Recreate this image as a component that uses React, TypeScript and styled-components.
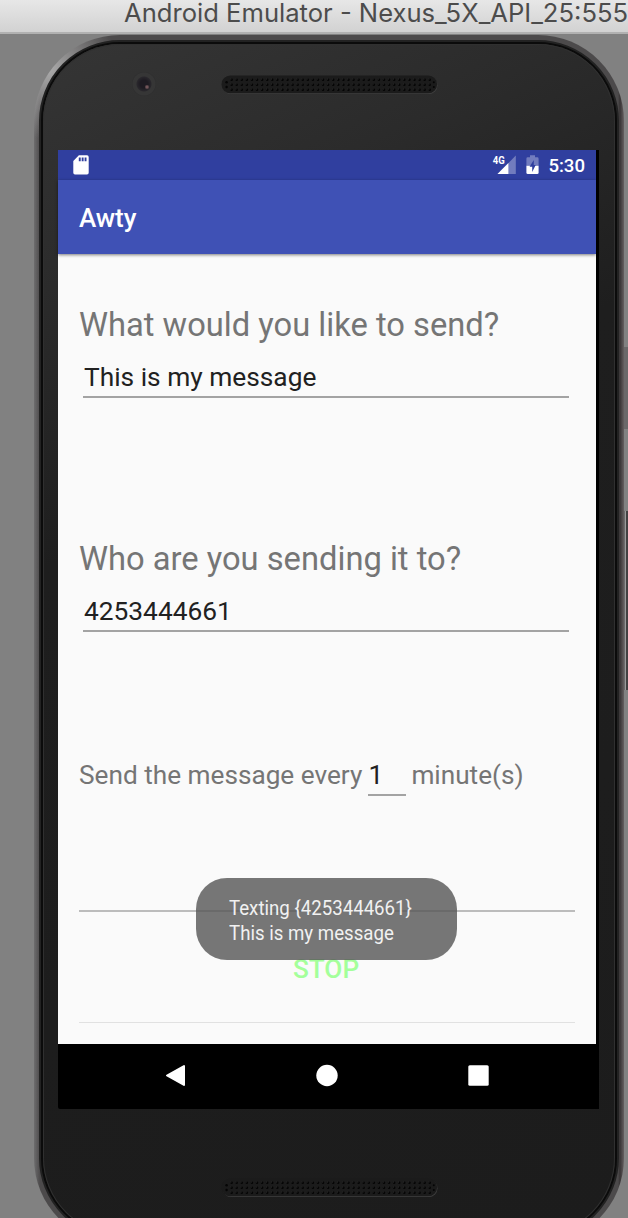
import React from "react";
import styled, { createGlobalStyle } from "styled-components";

const GlobalStyle = createGlobalStyle`
  * { box-sizing: border-box; }
  body { margin: 0; background: #818181; font-family: Roboto, sans-serif; overflow: hidden; }
`;

const Window = styled.div`
  width: 628px;
  height: 1218px;
  overflow: hidden;
  display: flex;
  flex-direction: column;
  background: #818181;
`;

const TitleBar = styled.header`
  flex: none;
  height: 34px;
  padding-left: 124px;
  background: linear-gradient(#e7e7e7, #d2d2d2 32px, #b1b1b1 32px);
  color: #4c4c4c;
  font-family: Inter, sans-serif;
  font-size: 25.6px;
  line-height: 26px;
  white-space: nowrap;
`;

const TitleText = styled.span`
  display: inline-block;
`;

const Stage = styled.main`
  position: relative;
  flex: 1;
  overflow: hidden;
`;

const SideButton = styled.div<{ $top: number; $height: number; $dark?: boolean }>`
  position: absolute;
  left: 624px;
  top: ${(p) => p.$top}px;
  width: 4px;
  height: ${(p) => p.$height}px;
  background: ${(p) => (p.$dark ? "linear-gradient(90deg, #6c6a6b 1px, #9a9a9a 1px 2px, #434142 2px)" : "#6a6869")};
`;

const Shell = styled.div`
  width: 590px;
  height: 1209px;
  margin: 1px 0 0 34px;
  padding: 5px;
  border-radius: 86px;
  background:
    radial-gradient(circle at 14px 34px, rgba(205, 205, 205, 0.75), rgba(160, 160, 160, 0) 70px),
    linear-gradient(90deg, #6e6d6e 0, #4c4a4b 6px, #4c4a4b 584px, #383435 586px, #655f60 590px);
`;

const Rim = styled.div`
  height: 100%;
  padding: 2px;
  border-radius: 81px;
  background: #0b0b0b;
  border: 2px solid #222222;
`;

const Face = styled.div`
  height: 100%;
  padding-left: 15px;
  border-radius: 77px;
  background: linear-gradient(155deg, #353535 0%, #2b2b2b 17%, #1e1e1e 36%, #1c1c1c 100%);
  box-shadow: inset 0 0 0 1px #303030;
  display: flex;
  flex-direction: column;
`;

const TopBezel = styled.div`
  flex: none;
  height: 106px;
  display: flex;
  align-items: flex-start;
  padding: 28px 0 0 74px;
`;

const Camera = styled.div`
  width: 24px;
  height: 24px;
  border-radius: 50%;
  background: radial-gradient(circle at 15px 15px, #73565a 0 1px, transparent 2.5px),
    radial-gradient(circle, #1e1b22 0 4px, #29272c 7px, #363636 8px 11px, #2e2e2f 12px);
`;

const TopSpeaker = styled.div`
  margin: 3px 0 0 65px;
  height: 19px;
`;

const BottomBezel = styled.div`
  padding: 69px 0 0 163px;
`;

const Display = styled.div`
  flex: none;
  position: relative;
  width: 541px;
  height: 959px;
  background: #000;
  border-radius: 0 0 0 2px;
`;

const Screen = styled.div`
  width: 538px;
  height: 894px;
  background: #fafafa;
  display: flex;
  flex-direction: column;
`;

const StatusBar = styled.div`
  flex: none;
  height: 30px;
  background: #303f9f;
  display: flex;
  align-items: center;
  padding: 0 11px 0 15px;
  color: #fff;
`;

const StatusIcons = styled.div`
  margin-left: auto;
  display: flex;
  align-items: center;
`;

const Clock = styled.span`
  margin-left: 9px;
  padding-top: 2px;
  font-size: 18.6px;
  font-weight: 500;
  line-height: 28px;
`;

const AppBar = styled.div`
  flex: none;
  height: 74px;
  padding-left: 21px;
  background: #3f51b5;
  color: #fff;
  font-size: 26px;
  font-weight: 500;
  line-height: 76px;
  box-shadow: 0 1px 3px rgba(0, 0, 0, 0.5);
`;

const Form = styled.div`
  padding: 49px 21px 0;
  display: flex;
  flex-direction: column;
`;

const Field = styled.div`
  height: 234px;
`;

const Question = styled.label`
  display: block;
  height: 44px;
  line-height: 44px;
  font-size: 32.7px;
  color: #757575;
  white-space: nowrap;
`;

const Value = styled.div`
  height: 51px;
  margin: 0 6px 0 4px;
  padding: 10px 0 0 1px;
  line-height: 40px;
  border-bottom: 2px solid #a3a3a3;
  font-size: 26.3px;
  color: #212121;
  white-space: nowrap;
`;

const IntervalRow = styled.div`
  display: flex;
  height: 139px;
  margin-top: -16px;
  margin-bottom: 16px;
  font-size: 26.2px;
  line-height: 40px;
  color: #757575;
  white-space: nowrap;
`;

const Interval = styled.div`
  width: 38px;
  height: 41px;
  margin: 0 5px 0 6px;
  border-bottom: 2px solid #a3a3a3;
  color: #212121;
`;

const Rule = styled.div<{ $strong?: boolean }>`
  height: ${(p) => (p.$strong ? 2 : 1)}px;
  background: ${(p) => (p.$strong ? "#bcbcbc" : "#e1e1e1")};
`;

const StopButton = styled.button`
  height: 110px;
  border: 0;
  padding: 3px 2px 0 0;
  background: none;
  color: #a4ff9b;
  font: 500 26.2px Roboto, sans-serif;
`;

const Toast = styled.div`
  position: absolute;
  left: 138px;
  top: 728px;
  width: 261px;
  height: 82px;
  padding: 18px 0 0 33px;
  border-radius: 31px;
  background: rgba(85, 85, 85, 0.8);
  color: #f1f1f1;
  font-size: 20.5px;
  line-height: 24.5px;
  white-space: nowrap;
`;

const ToastLine = styled.div`
  width: max-content;
  transform: scaleX(0.91);
  transform-origin: left;
`;

const NavBar = styled.nav`
  height: 65px;
  padding: 20px 110px 0 107px;
  display: flex;
  justify-content: space-between;
`;

const columns = Array.from({ length: 40 }, (_, i) => 10.6 + i * 5.08);
const rows = [4.8, 9.8, 14.8];

function Speaker() {
  return (
    <svg width="218" height="20" viewBox="0 0 218 20" style={{ display: "block" }}>
      <rect x="1.5" y="1.5" width="215" height="17.5" rx="8.7" fill="#414141" />
      <rect x="0.5" y="0.5" width="215.6" height="17.8" rx="8.8" fill="#1b1b1b" />
      {rows.map((y) =>
        columns.map((x) => (
          <g key={`${x}-${y}`}>
            <circle cx={x} cy={y} r="1.25" fill="#050505" />
            <circle cx={x - 0.7} cy={y - 0.8} r="0.5" fill="#3a3a3a" />
          </g>
        ))
      )}
      <circle cx="5.6" cy="7.2" r="1.2" fill="#050505" />
      <circle cx="5.6" cy="12" r="1.2" fill="#050505" />
      <circle cx="212.8" cy="7.2" r="1" fill="#050505" />
      <circle cx="212.8" cy="12" r="1" fill="#050505" />
    </svg>
  );
}

function SdCard() {
  return (
    <svg width="16" height="20" viewBox="0 0 16 20">
      <path
        fill="#fff"
        fillRule="evenodd"
        d="M5.9.3H14a1.7 1.7 0 0 1 1.7 1.7v15.7a1.7 1.7 0 0 1-1.7 1.7H2a1.7 1.7 0 0 1-1.7-1.7V6zM5.8 2.4v3.8h1.9V2.4zm2.9 0v3.8h1.9V2.4zm2.9 0v3.8h1.9V2.4z"
      />
    </svg>
  );
}

function Signal() {
  return (
    <svg width="24" height="20" viewBox="0 0 24 20">
      <path d="M23.8.6v18.3H5.5z" fill="#fff" fillOpacity=".32" />
      <path d="M0 0h13v9.4H0z" fill="#303f9f" />
      <path d="M16.4 8v10.9H5.5z" fill="#fff" />
      <text
        x="0.8"
        y="9"
        fontSize="11"
        fontWeight="700"
        fontFamily="Roboto, sans-serif"
        fill="#fff"
        textLength="12"
        lengthAdjust="spacingAndGlyphs"
      >
        4G
      </text>
    </svg>
  );
}

function Battery() {
  return (
    <svg width="13" height="20" viewBox="0 0 13 20" style={{ marginLeft: 10 }}>
      <path d="M4 .3h5v2h2.2q1.4 0 1.4 1.4v7H.4v-7q0-1.4 1.4-1.4H4z" fill="#fff" fillOpacity=".32" />
      <path d="M.4 10.7h12.2v7q0 1.4-1.4 1.4H1.8q-1.4 0-1.4-1.4z" fill="#fff" />
      <path d="M7.8 5 3.6 11.8h2.6v5.2l3.5-7H7.8z" fill="#303f9f" />
    </svg>
  );
}

export default function App() {
  return (
    <Window>
      <GlobalStyle />
      <TitleBar>
        <TitleText>Android Emulator - Nexus_5X_API_25:555</TitleText>
      </TitleBar>
      <Stage>
        <SideButton $top={313} $height={82} />
        <SideButton $top={477} $height={179} $dark />
        <Shell>
          <Rim>
            <Face>
              <TopBezel>
                <Camera />
                <TopSpeaker>
                  <Speaker />
                </TopSpeaker>
              </TopBezel>
              <Display>
                <Screen>
                  <StatusBar>
                    <SdCard />
                    <StatusIcons>
                      <Signal />
                      <Battery />
                      <Clock>5:30</Clock>
                    </StatusIcons>
                  </StatusBar>
                  <AppBar>Awty</AppBar>
                  <Form>
                    <Field>
                      <Question>What would you like to send?</Question>
                      <Value>This is my message</Value>
                    </Field>
                    <Field>
                      <Question>Who are you sending it to?</Question>
                      <Value>4253444661</Value>
                    </Field>
                    <IntervalRow>
                      <span>Send the message every</span>
                      <Interval>1</Interval>
                      <span>minute(s)</span>
                    </IntervalRow>
                    <Rule $strong />
                    <StopButton>STOP</StopButton>
                    <Rule />
                  </Form>
                </Screen>
                <NavBar>
                  <svg width="21" height="23" viewBox="0 0 21 23">
                    <path d="M19 2v19L2 11.5z" fill="#fff" stroke="#fff" strokeWidth="2" strokeLinejoin="round" />
                  </svg>
                  <svg width="22" height="23" viewBox="0 0 22 23">
                    <circle cx="11" cy="11.5" r="10.7" fill="#fff" />
                  </svg>
                  <svg width="21" height="23" viewBox="0 0 21 23">
                    <rect x="0.3" y="1.3" width="20.4" height="20.4" rx="1.5" fill="#fff" />
                  </svg>
                </NavBar>
                <Toast>
                  <ToastLine>Texting {"{4253444661}"}</ToastLine>
                  <ToastLine>This is my message</ToastLine>
                </Toast>
              </Display>
              <BottomBezel>
                <Speaker />
              </BottomBezel>
            </Face>
          </Rim>
        </Shell>
      </Stage>
    </Window>
  );
}
